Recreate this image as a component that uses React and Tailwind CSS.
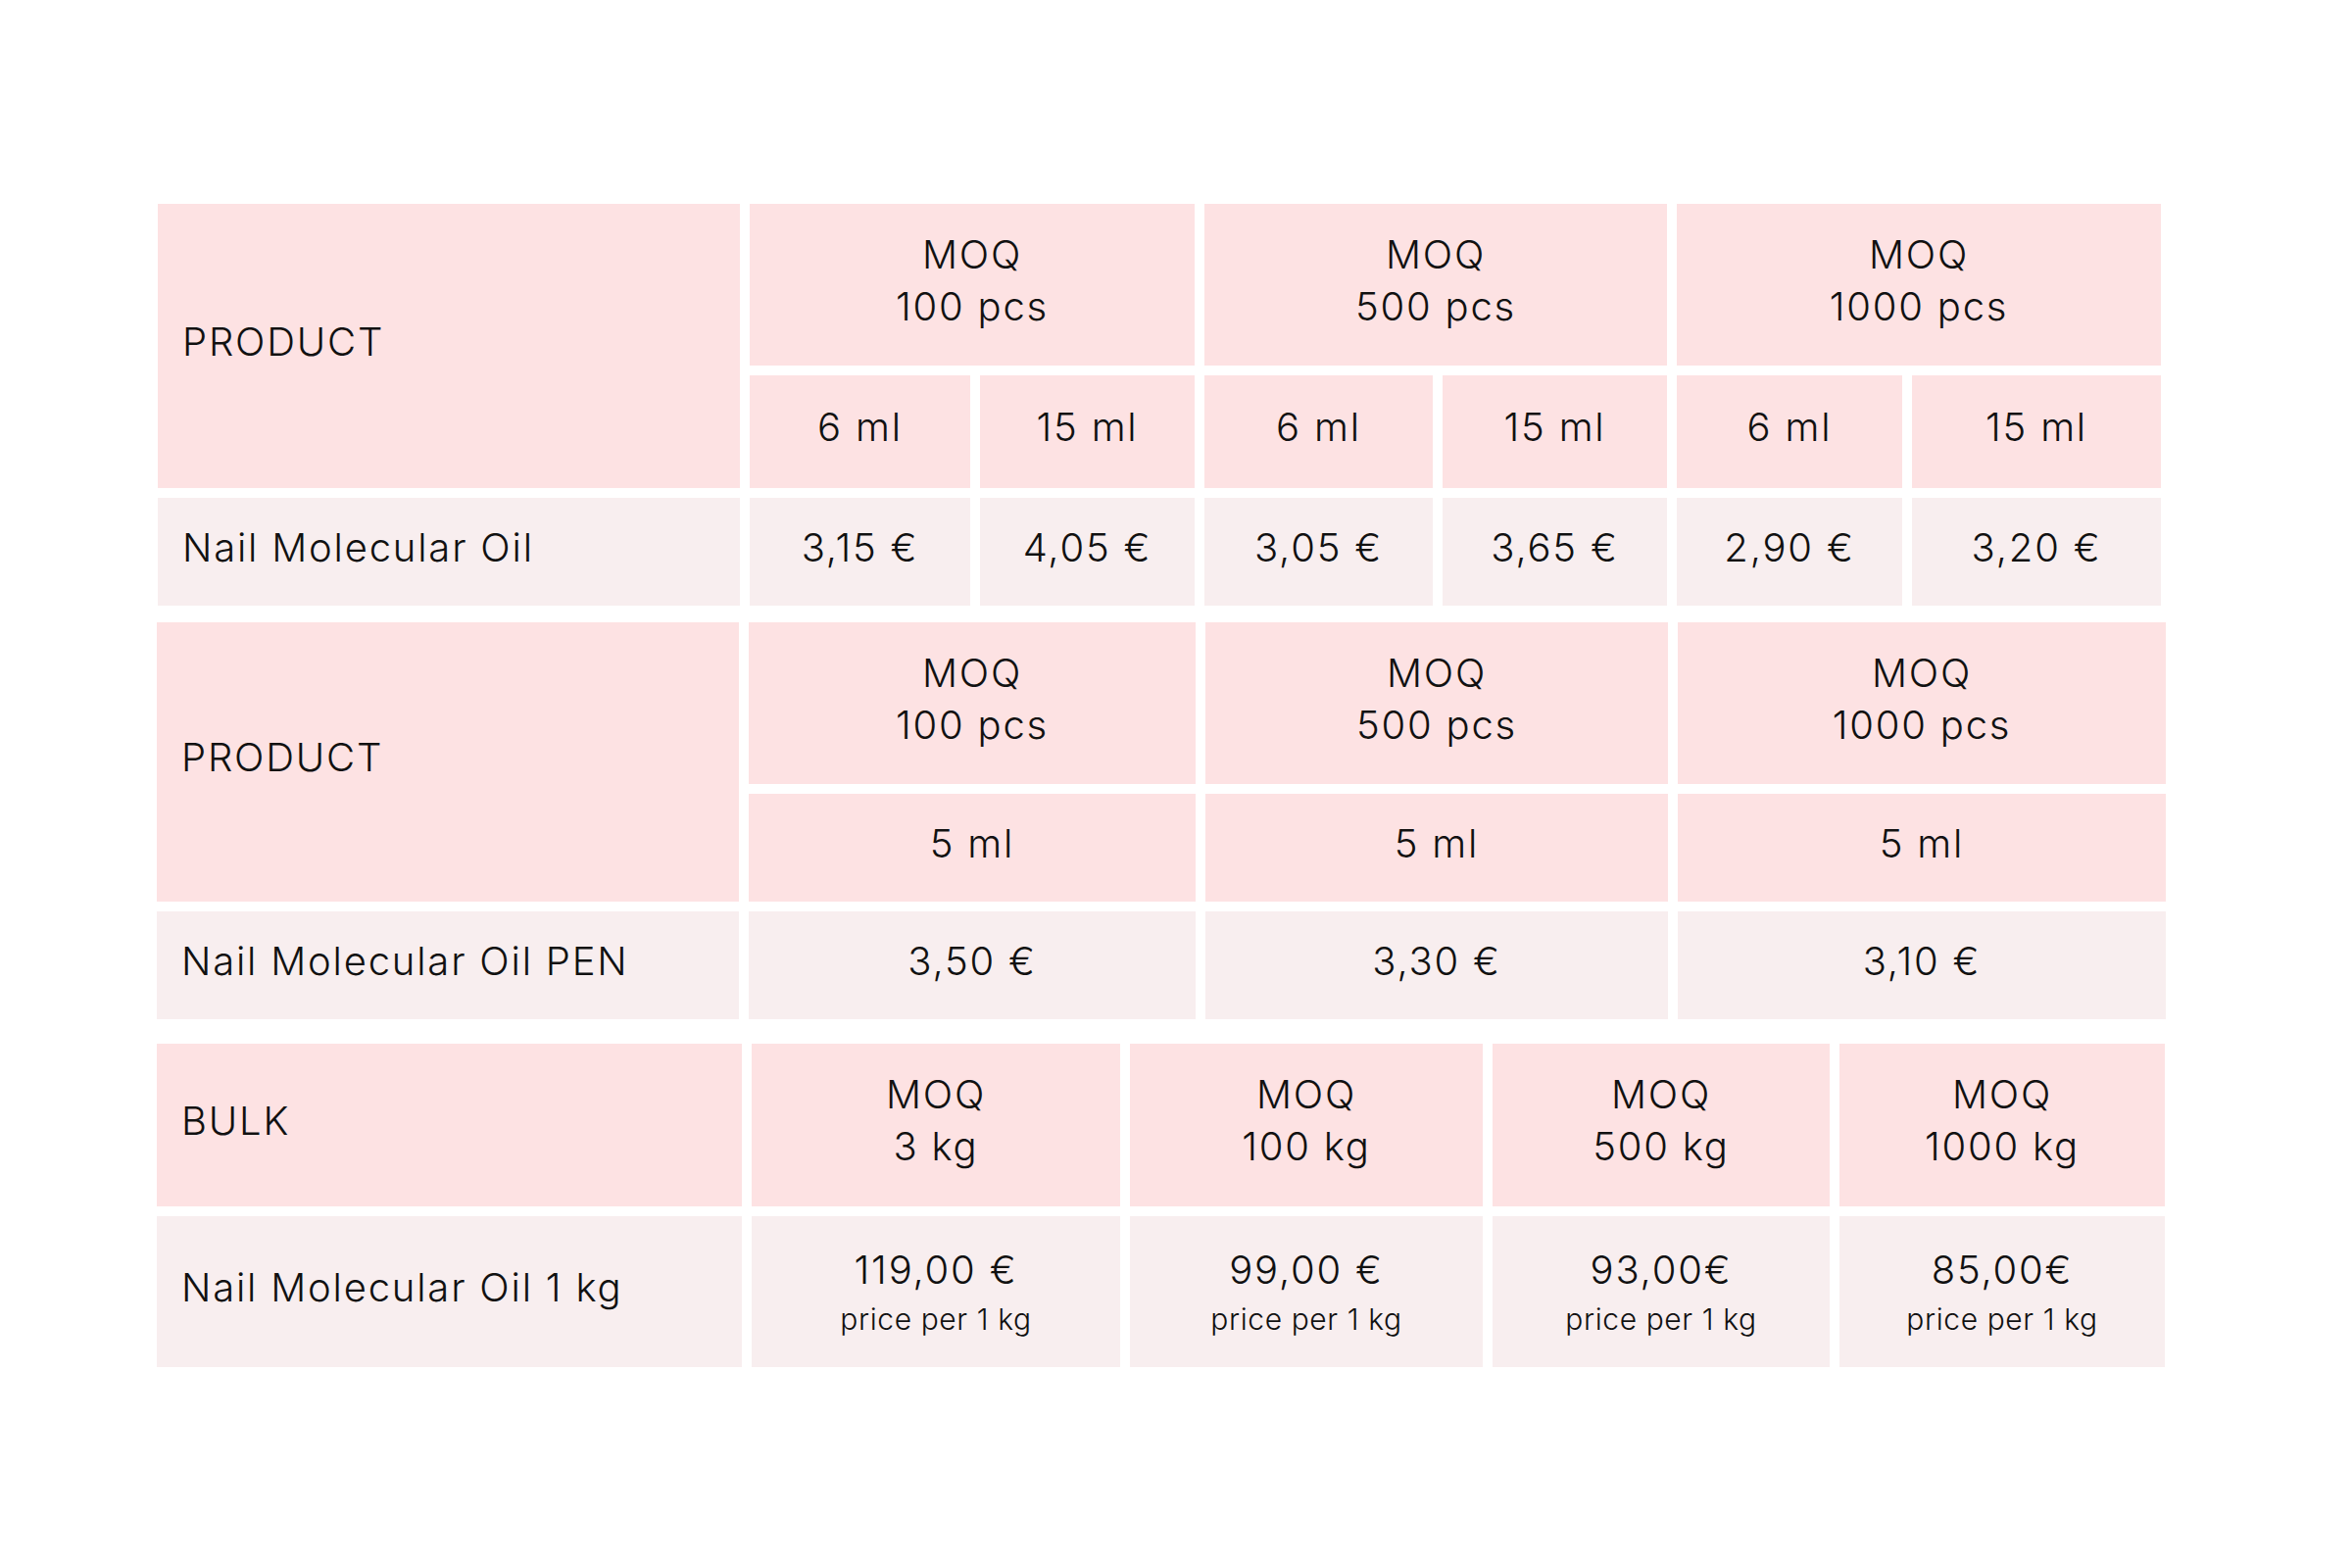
import clsx from 'clsx';

const font = { fontFamily: 'Inter, "Noto Sans", sans-serif' };

function Cell({ children, head, left, className }) {
  return (
    <div
      className={clsx(
        'flex items-center pb-[10px] text-[40px] leading-[53px] font-light tracking-[0.045em] text-[#111]',
        head ? 'bg-[#fde2e3]' : 'bg-[#f8eeef]',
        left ? 'pl-[25px]' : 'justify-center text-center',
        className
      )}
    >
      {children}
    </div>
  );
}

function Moq({ qty, className }) {
  return (
    <Cell head className={className}>
      <div>
        MOQ
        <br />
        {qty}
      </div>
    </Cell>
  );
}

function BulkPrice({ price }) {
  return (
    <Cell>
      <div className="flex flex-col items-center pt-[13px]">
        <span className="leading-[52px]">{price}</span>
        <span className="text-[30px] leading-[48px] tracking-[0.02em]">price per 1 kg</span>
      </div>
    </Cell>
  );
}

const oilPrices = ['3,15 €', '4,05 €', '3,05 €', '3,65 €', '2,90 €', '3,20 €'];
const penPrices = ['3,50 €', '3,30 €', '3,10 €'];
const bulk = [
  { qty: '3 kg', price: '119,00 €' },
  { qty: '100 kg', price: '99,00 €' },
  { qty: '500 kg', price: '93,00€' },
  { qty: '1000 kg', price: '85,00€' },
];

export default function App() {
  return (
    <div className="w-[2400px] h-[1600px] bg-white pt-[208px] pl-[160px]" style={font}>
      {/* 6 ml / 15 ml */}
      <div className="ml-px grid grid-cols-[594px_225px_219px_233px_229px_230px_254px] grid-rows-[165px_115px_110px] gap-[10px]">
        <Cell head left className="row-span-2">PRODUCT</Cell>
        <Moq qty="100 pcs" className="col-span-2" />
        <Moq qty="500 pcs" className="col-span-2" />
        <Moq qty="1000 pcs" className="col-span-2" />
        {['6 ml', '15 ml', '6 ml', '15 ml', '6 ml', '15 ml'].map((s, i) => (
          <Cell head key={i}>{s}</Cell>
        ))}
        <Cell left>Nail Molecular Oil</Cell>
        {oilPrices.map((p, i) => (
          <Cell key={i}>{p}</Cell>
        ))}
      </div>

      {/* PEN */}
      <div className="mt-[17px] grid grid-cols-[594px_456px_472px_498px] grid-rows-[165px_110px_110px] gap-[10px]">
        <Cell head left className="row-span-2">PRODUCT</Cell>
        <Moq qty="100 pcs" />
        <Moq qty="500 pcs" />
        <Moq qty="1000 pcs" />
        <Cell head>5 ml</Cell>
        <Cell head>5 ml</Cell>
        <Cell head>5 ml</Cell>
        <Cell left>Nail Molecular Oil PEN</Cell>
        {penPrices.map((p, i) => (
          <Cell key={i}>{p}</Cell>
        ))}
      </div>

      {/* bulk */}
      <div className="mt-[25px] grid grid-cols-[597px_376px_360px_344px_332px] grid-rows-[166px_154px] gap-[10px]">
        <Cell head left>BULK</Cell>
        {bulk.map((b) => (
          <Moq key={b.qty} qty={b.qty} />
        ))}
        <Cell left>Nail Molecular Oil 1 kg</Cell>
        {bulk.map((b) => (
          <BulkPrice key={b.qty} price={b.price} />
        ))}
      </div>
    </div>
  );
}
